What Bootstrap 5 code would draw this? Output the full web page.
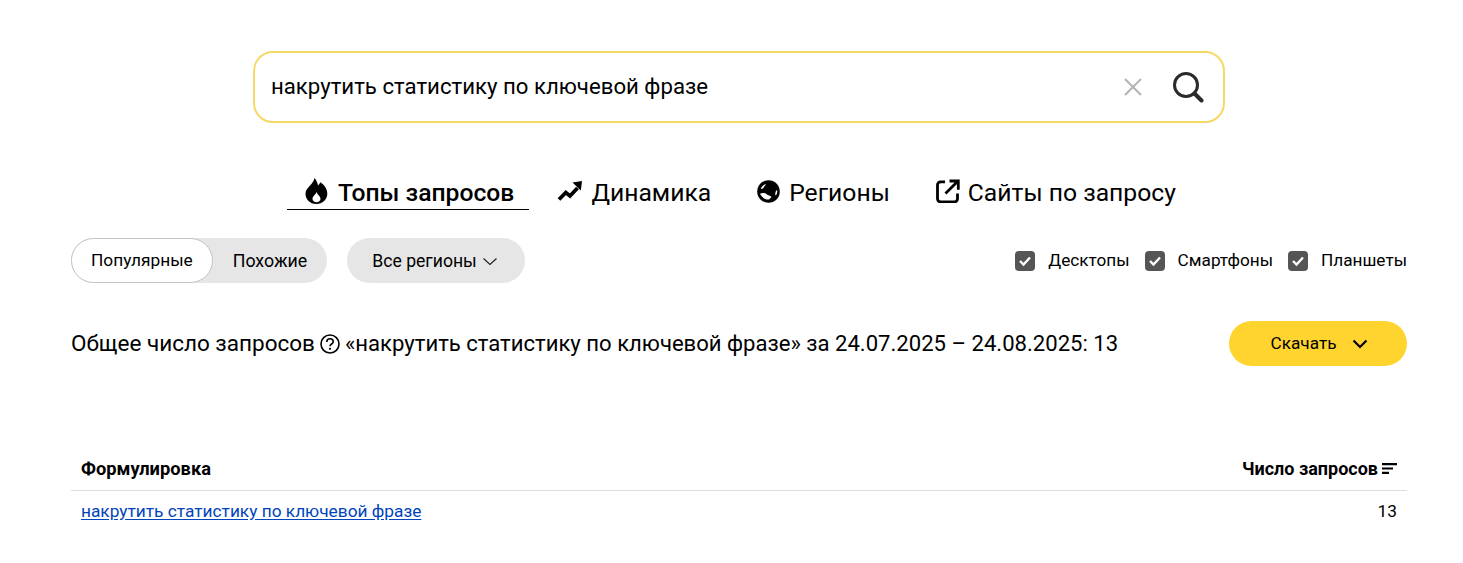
<!DOCTYPE html>
<html lang="ru">
<head>
<meta charset="utf-8">
<title>Топы запросов</title>
<link href="https://cdn.jsdelivr.net/npm/bootstrap@5.3.0/dist/css/bootstrap.min.css" rel="stylesheet">
<style>
html,body{background:#fff;height:563px;overflow:hidden}
body{font-family:Roboto,"Liberation Sans",sans-serif;color:#000;font-size:17.3px}
.ws-page{padding:51px 56px 0 71px}
.ws-search{width:972px;height:72px;border:2px solid #f6d965;border-radius:20px;padding:0 19px 0 16px;margin:0 auto}
.ws-search-text{font-size:22.2px;line-height:28px;flex:1;color:#000;margin-top:-2px}
.ws-clear{margin-right:29px;margin-left:-1px}
.ws-tabs{margin-top:49px;height:40px;gap:15px;padding-left:2px}
.ws-tab{font-size:24.7px;line-height:32px;padding:6px 17px 2px 14px;height:38px;color:#000;text-decoration:none;gap:9px}
.ws-tab.is-on{border-bottom:1px solid #000;font-weight:500;padding-left:18px;padding-right:15px;margin-right:-1px;gap:10px}
.ws-tab svg{margin-top:-4px}
.ws-tab-ext{gap:8px}
.ws-filters{margin-top:26px;height:45px}
.ws-seg{background:#e6e6e6;border-radius:23px;height:45px}
.ws-seg-on{background:#fff;border:1px solid #c4c4c4;border-radius:23px;height:45px;padding:1px 19px 0 19px;font-size:17.3px}
.ws-seg-off{padding:2px 20px 0 20px;font-size:17.8px}
.ws-region{background:#e6e6e6;border-radius:23px;height:45px;width:178px;margin-left:20px;gap:5px;padding:2px 0 0 25px;font-size:17.6px}
.ws-check-box{width:20px;height:20px;background:#555;border-radius:4px;margin-right:13px}
.ws-checks{gap:15px;font-size:17.2px;margin-top:1px}
.ws-total{margin-top:38px;height:45px}
.ws-total-text{font-size:22.1px;line-height:28px;margin-top:-2px}
.ws-total-lead{font-size:22.5px}
.ws-help{margin:0 5px 0 5px;vertical-align:-3px}
.ws-dl{background:#ffd42e;border-radius:23px;width:178px;height:45px;font-size:17.2px;gap:15px;border:0;color:#000;padding:0 0 0 2px}
.ws-table{margin-top:80px;width:100%}
.ws-head{height:45px;border-bottom:1px solid #dedede;padding:2px 10px 0;font-weight:700;font-size:18.3px}
.ws-head-num{font-size:18px;margin-top:-2px}
.ws-row{height:41px;padding:0 10px;font-size:17.3px}
.ws-row a{color:#04b;text-decoration:underline;text-underline-offset:2px}
</style>
</head>
<body>
<main class="ws-page">
  <div class="ws-search d-flex align-items-center">
    <div class="ws-search-text">накрутить статистику по ключевой фразе</div>
    <svg class="ws-clear" width="20" height="20" viewBox="0 0 20 20" aria-hidden="true"><path d="M2 2 18 18M18 2 2 18" stroke="#b3b3b3" stroke-width="2" fill="none"/></svg>
    <svg width="32" height="32" viewBox="0 0 32 32" aria-hidden="true"><circle cx="14" cy="14" r="11.500" fill="none" stroke="#2b2b2b" stroke-width="3"/><path d="M22.500 22.500 29.500 29.500" stroke="#2b2b2b" stroke-width="4" stroke-linecap="round"/></svg>
  </div>

  <nav class="ws-tabs d-flex justify-content-center">
    <a class="ws-tab is-on d-flex align-items-center" href="#">
      <svg width="23" height="26" viewBox="0 0 23 26" aria-hidden="true"><path fill="#000" fill-rule="evenodd" d="M9.500 0c2.500 3 3 5 3.500 7.500 1-.8 1.800-2 2.300-3.300 3.700 2.300 7 6.300 7 11.300 0 6.200-4.800 10.500-11 10.500S.5 21.700.5 15.500C.5 9.500 8.500 6.500 9.500 0ZM11.500 14c-1 3-4 4-4 7 0 2 1.800 3.200 4 3.200s4-1.200 4-3.200c0-3-3-4-4-7Z"/></svg>
      <span>Топы запросов</span>
    </a>
    <a class="ws-tab d-flex align-items-center" href="#">
      <svg width="25" height="22" viewBox="0 0 25 22" aria-hidden="true"><path d="M2 19.500 8.800 12.500 13 16 20.500 8" fill="none" stroke="#000" stroke-width="3.800"/><path d="M15.500 2.500 25 1 23.800 10.500Z" fill="#000"/></svg>
      <span>Динамика</span>
    </a>
    <a class="ws-tab d-flex align-items-center" href="#">
      <svg width="23" height="23" viewBox="0 0 23 23" aria-hidden="true"><circle cx="11.500" cy="11.500" r="11.300" fill="#000"/><path fill="#fff" d="M3.800 8.500c1-2.200 3-3.800 5.200-4.500-.3 1.500-1.800 2.200-2.300 3.500-.4 1.200-1.800 1.500-2.900 1ZM3 13.800c2.200-1.300 5-.8 7 .6 2 1.300 3.800 1.200 4.500 2.700-.8.900-1.500 1.900-2.500 2.500-3.700.2-7.300-2.300-9-5.800ZM20 10c.5 1.500.2 3.800-1 5.500-.8-.3-1-1.500-.6-2.800.3-1.200.8-2.200 1.600-2.700Z"/></svg>
      <span>Регионы</span>
    </a>
    <a class="ws-tab ws-tab-ext d-flex align-items-center" href="#">
      <svg width="24" height="24" viewBox="0 0 24 24" aria-hidden="true"><path d="M9 2.800H4.500a3 3 0 0 0-3 3v14a3 3 0 0 0 3 3h14a3 3 0 0 0 3-3V14.500" fill="none" stroke="#000" stroke-width="2.800"/><path d="M9.500 14.500 21 3M13.500 2H22.300V10.800" fill="none" stroke="#000" stroke-width="2.800"/></svg>
      <span>Сайты по запросу</span>
    </a>
  </nav>

  <div class="ws-filters d-flex align-items-center">
    <div class="ws-seg d-flex align-items-center">
      <div class="ws-seg-on d-flex align-items-center">Популярные</div>
      <div class="ws-seg-off">Похожие</div>
    </div>
    <div class="ws-region d-flex align-items-center">
      <span>Все регионы</span>
      <svg width="16" height="9" viewBox="0 0 16 9" aria-hidden="true"><path d="M1.500 1.500 8 7.500 14.500 1.500" fill="none" stroke="#222" stroke-width="1.200"/></svg>
    </div>
    <div class="ws-checks d-flex align-items-center ms-auto">
      <label class="d-flex align-items-center"><span class="ws-check-box d-flex align-items-center justify-content-center"><svg width="14" height="12" viewBox="0 0 14 12" aria-hidden="true"><path d="M2 6 5.500 9.500 12 2.500" fill="none" stroke="#fff" stroke-width="2.400"/></svg></span>Десктопы</label>
      <label class="d-flex align-items-center"><span class="ws-check-box d-flex align-items-center justify-content-center"><svg width="14" height="12" viewBox="0 0 14 12" aria-hidden="true"><path d="M2 6 5.500 9.500 12 2.500" fill="none" stroke="#fff" stroke-width="2.400"/></svg></span>Смартфоны</label>
      <label class="d-flex align-items-center"><span class="ws-check-box d-flex align-items-center justify-content-center"><svg width="14" height="12" viewBox="0 0 14 12" aria-hidden="true"><path d="M2 6 5.500 9.500 12 2.500" fill="none" stroke="#fff" stroke-width="2.400"/></svg></span>Планшеты</label>
    </div>
  </div>

  <div class="ws-total d-flex align-items-center justify-content-between">
    <div class="ws-total-text"><span class="ws-total-lead">Общее число запросов</span><svg class="ws-help" width="20" height="20" viewBox="0 0 20 20" aria-hidden="true"><circle cx="10" cy="10" r="9" fill="none" stroke="#000" stroke-width="1.600"/><path d="M6.800 8c0-2 1.400-3.200 3.200-3.200S13.200 6 13.200 7.700c0 2.300-3.200 2.300-3.200 4.500" fill="none" stroke="#000" stroke-width="1.600"/><circle cx="10" cy="14.800" r="1.100" fill="#000"/></svg>«накрутить статистику по ключевой фразе» за 24.07.2025 – 24.08.2025: 13</div>
    <button class="ws-dl d-flex align-items-center justify-content-center" type="button">
      <span>Скачать</span>
      <svg width="16" height="10" viewBox="0 0 16 10" aria-hidden="true"><path d="M1.500 1.500 8 8 14.500 1.500" fill="none" stroke="#000" stroke-width="2.200"/></svg>
    </button>
  </div>

  <section class="ws-table">
    <div class="ws-head d-flex align-items-center justify-content-between">
      <span>Формулировка</span>
      <span class="ws-head-num d-flex align-items-center gap-1">Число запросов
        <svg width="15" height="11" viewBox="0 0 15 11" aria-hidden="true"><path d="M0 1.200H15M0 5.500H11M0 9.800H7" stroke="#000" stroke-width="2.200"/></svg>
      </span>
    </div>
    <div class="ws-row d-flex align-items-center justify-content-between">
      <a href="#">накрутить статистику по ключевой фразе</a>
      <span>13</span>
    </div>
  </section>
</main>
<script src="https://cdn.jsdelivr.net/npm/bootstrap@5.3.0/dist/js/bootstrap.bundle.min.js"></script>
</body>
</html>
